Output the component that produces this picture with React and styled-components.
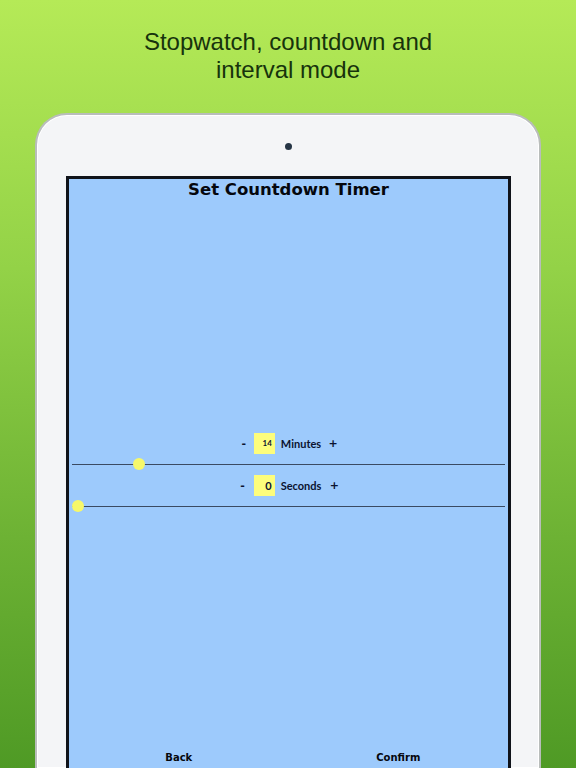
import React from "react";
import styled, { createGlobalStyle } from "styled-components";

const Global = createGlobalStyle`
  html, body { margin: 0; padding: 0; }
  body { width: 576px; height: 768px; overflow: hidden; }
  * { box-sizing: border-box; }
`;

const Page = styled.div`
  width: 576px;
  height: 768px;
  overflow: hidden;
  display: flex;
  flex-direction: column;
  align-items: center;
  background: linear-gradient(180deg, #b5ea57 0%, #93d247 35%, #6db234 70%, #4f9a25 100%);
`;

const Caption = styled.h1`
  margin: 28px 0 0;
  font-family: "Liberation Sans", Arial, sans-serif;
  font-weight: 400;
  font-size: 24px;
  line-height: 28px;
  color: #17330c;
  text-align: center;
`;

const Device = styled.div`
  margin-top: 29px;
  width: 506px;
  flex: 1;
  display: flex;
  flex-direction: column;
  align-items: center;
  background: #f4f5f7;
  border: 2px solid #b9bdbb;
  border-bottom: none;
  border-radius: 32px 32px 0 0;
  box-shadow: inset 0 0 0 1px #ffffff;
  padding: 0 28px 0 29px;
`;

const Camera = styled.div`
  margin-top: 28px;
  width: 7px;
  height: 7px;
  border-radius: 50%;
  background: #263545;
`;

const Screen = styled.div`
  margin-top: 26px;
  align-self: stretch;
  flex: 1;
  display: flex;
  flex-direction: column;
  background: #9dcafc;
  border: 3px solid #10131a;
  border-bottom: none;
  font-family: "Lato", "Open Sans", sans-serif;
  color: #0b1330;
`;

const Title = styled.h2`
  margin: 0;
  font-family: "DejaVu Sans", sans-serif;
  font-size: 16.5px;
  line-height: 21px;
  font-weight: 700;
  text-align: center;
  color: #05070d;
`;

const Controls = styled.div`
  margin-top: 222px;
  display: flex;
  flex-direction: column;
`;

const Row = styled.div`
  height: ${(p) => p.$h}px;
  display: flex;
  align-items: center;
  justify-content: center;
  gap: 4px;
`;

const Sign = styled.span`
  font-family: "DejaVu Sans", sans-serif;
  font-size: 11px;
  font-weight: 700;
  width: 10px;
  text-align: center;
  margin: 0 ${(p) => p.$m}px;
`;

const ValueBox = styled.span`
  width: 21px;
  height: 21px;
  background: #fdfd7c;
  display: flex;
  align-items: center;
  justify-content: flex-end;
  padding-right: 3px;
  font-size: ${(p) => p.$size}px;
  font-weight: 700;
`;

const Label = styled.span`
  font-size: 11px;
  font-weight: 700;
  padding: 0 2px;
`;

const Track = styled.div`
  position: relative;
  margin: 0 3px;
  height: 1px;
  background: #3a4a62;
`;

const Thumb = styled.div`
  position: absolute;
  top: -6px;
  width: 12px;
  height: 12px;
  margin-left: -6px;
  border-radius: 50%;
  background: #f6f86a;
`;

const Footer = styled.div`
  margin-top: auto;
  display: grid;
  grid-template-columns: 1fr 1fr;
  height: 22px;
  align-items: center;
`;

const FooterButton = styled.button`
  all: unset;
  justify-self: center;
  font-family: "DejaVu Sans", sans-serif;
  font-size: 10px;
  font-weight: 700;
  color: #05070d;
`;

function Stepper({ value, label, valueSize, height, m }) {
  return (
    <Row $h={height}>
      <Sign $m={m}>-</Sign>
      <ValueBox $size={valueSize}>{value}</ValueBox>
      <Label>{label}</Label>
      <Sign $m={m}>+</Sign>
    </Row>
  );
}

function Slider({ value, max }) {
  const trackLen = 433;
  const center = 6 + (value / max) * (trackLen - 12);
  return (
    <Track>
      <Thumb style={{ left: `${center}px` }} />
    </Track>
  );
}

export default function App() {
  return (
    <>
      <Global />
      <Page>
        <Caption>
          Stopwatch, countdown and
          <br />
          interval mode
        </Caption>
        <Device>
          <Camera />
          <Screen>
            <Title>Set Countdown Timer</Title>
            <Controls>
              <Stepper value="14" label="Minutes" valueSize={8} height={42} m={1} />
              <Slider value={14} max={96} />
              <Stepper value="0" label="Seconds" valueSize={11} height={41} m={2} />
              <Slider value={0} max={60} />
            </Controls>
            <Footer>
              <FooterButton>Back</FooterButton>
              <FooterButton>Confirm</FooterButton>
            </Footer>
          </Screen>
        </Device>
      </Page>
    </>
  );
}
